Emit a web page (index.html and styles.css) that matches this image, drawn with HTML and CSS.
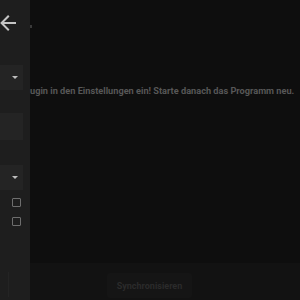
FILE: index.html
```html
<!DOCTYPE html>
<html lang="de">
<head>
<meta charset="utf-8">
<link rel="stylesheet" href="styles.css">
</head>
<body>
<div class="app">
  <aside class="drawer">
    <div class="drawer-top">
      <svg class="back" width="24" height="24" viewBox="0 0 24 24"><path d="M20,11V13H8L13.5,18.5L12.08,19.92L4.16,12L12.08,4.08L13.5,5.5L8,11H20Z" fill="#c4c4c4"/></svg>
    </div>
    <div class="field select"><span class="caret"></span></div>
    <div class="field"></div>
    <div class="field select"><span class="caret"></span></div>
    <div class="checks">
      <span class="box"></span>
      <span class="box"></span>
    </div>
    <div class="drawer-bottom"><span class="edge"></span></div>
  </aside>
  <main class="main">
    <div class="content">
      <span class="dot"></span>
      <p class="msg">ugin in den Einstellungen ein! Starte danach das Programm neu.</p>
    </div>
    <footer class="bar">
      <button class="sync">Synchronisieren</button>
    </footer>
  </main>
</div>
</body>
</html>
```
FILE: styles.css
```css
html, body {
  margin: 0;
  padding: 0;
  width: 300px;
  height: 300px;
  overflow: hidden;
  background: #0e0e0e;
  font-family: Roboto, "Liberation Sans", sans-serif;
}
.app {
  display: flex;
  width: 300px;
  height: 300px;
}
.drawer {
  width: 30px;
  flex: none;
  background: #1e1e1e;
  display: flex;
  flex-direction: column;
  overflow: hidden;
}
.drawer-top {
  height: 65px;
  position: relative;
}
.back {
  position: absolute;
  left: -4px;
  top: 11px;
}
.field {
  width: 23px;
  height: 25px;
  background: #242424;
  display: flex;
  align-items: center;
  justify-content: flex-end;
  padding-right: 5px;
  box-sizing: border-box;
}
.field + .field { margin-top: 23px; }
.field:nth-of-type(3) { height: 27px; }
.field:nth-of-type(4) { margin-top: 25px; }
.caret {
  width: 0;
  height: 0;
  border-left: 3px solid transparent;
  border-right: 3px solid transparent;
  border-top: 3px solid #bdbdbd;
}
.checks {
  display: flex;
  flex-direction: column;
  gap: 10px;
  padding: 8px 0 0 12px;
}
.box {
  width: 9px;
  height: 9px;
  border: 1.5px solid #6e6e6e;
  border-radius: 1px;
  box-sizing: border-box;
}
.drawer-bottom {
  margin-top: auto;
  height: 25px;
  padding-bottom: 3px;
  display: flex;
}
.edge {
  width: 8px;
  border-right: 1px solid #242424;
}
.main {
  flex: 1;
  display: flex;
  flex-direction: column;
  min-width: 0;
}
.content {
  flex: 1;
  position: relative;
  padding-top: 85px;
}
.dot {
  position: absolute;
  left: 0;
  top: 25px;
  width: 2px;
  height: 3px;
  background: #3a3a3a;
}
.msg {
  margin: 0;
  white-space: nowrap;
  font-size: 9.2px;
  font-weight: 700;
  color: #575757;
  line-height: 12px;
}
.bar {
  height: 37px;
  background: #121212;
  padding: 10px 0 0 77px;
  box-sizing: border-box;
}
.sync {
  width: 85px;
  height: 25px;
  border: none;
  border-radius: 3px;
  background: #151515;
  color: #2b2b2b;
  font-family: Roboto, "Liberation Sans", sans-serif;
  font-weight: 700;
  font-size: 9px;
  padding: 0;
}
```
